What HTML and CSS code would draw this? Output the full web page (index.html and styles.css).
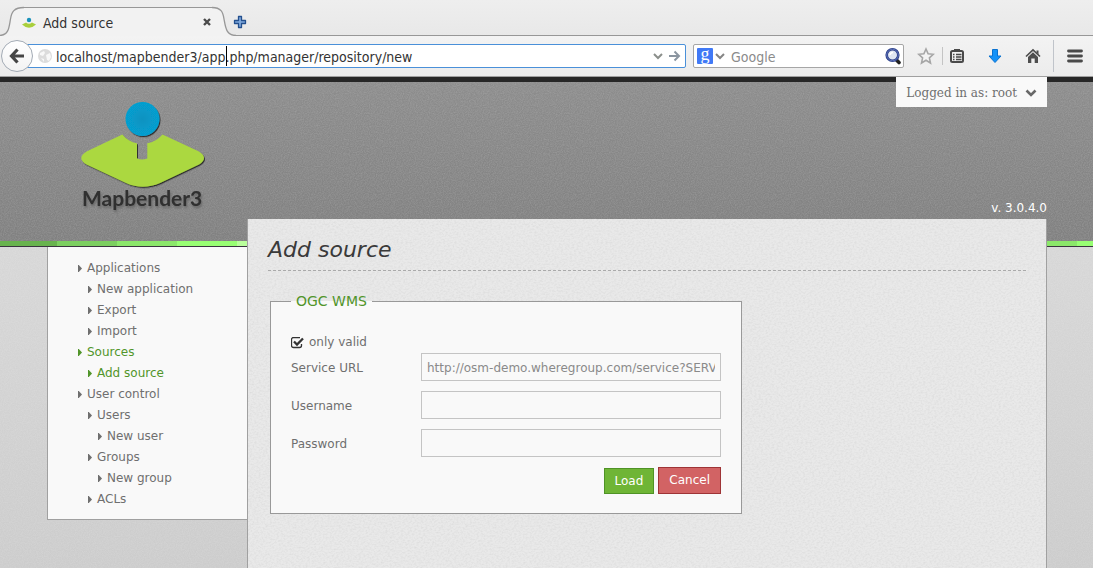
FILE: index.html
```html
<!DOCTYPE html>
<html lang="en">
<head>
<meta charset="utf-8">
<title>Add source</title>
<link rel="stylesheet" href="styles.css">
</head>
<body>
<div class="browser">
  <div class="tabstrip">
    <div class="tab">
      <svg class="tab-edge" width="24" height="36" viewBox="0 0 24 36" aria-hidden="true"><path class="edge-fill" d="M0 36V35.500C9 35 9 27 10.500 19 11.500 12 14 7.500 24 7.500V36z"/><path class="edge-line" d="M0 35.500C9 35 9 27 10.500 19 11.500 12 14 7.500 24 7.500"/></svg>
      <div class="tab-body">
        <svg width="16" height="16" viewBox="0 0 16 16" aria-hidden="true"><path d="M1 9.500 5 7.500Q8 10 11 7.500L15 9.500Q8 16 1 9.500z" fill="#a9cf3c"/><circle cx="8" cy="5" r="2.200" fill="#1b93bb"/></svg>
        <span class="tab-title">Add source</span>
        <button class="tab-close" aria-label="Close tab"><svg width="10" height="10" viewBox="0 0 10 10"><path d="M2 1l6 6M8 1l-6 6" stroke="#4a4a4a" stroke-width="2.400"/></svg></button>
      </div>
      <svg class="tab-edge" width="24" height="36" viewBox="0 0 24 36" aria-hidden="true"><path class="edge-fill" d="M0 7.500C9 7.500 11 12 12 19 13.500 27 14 35.500 24 35.500V36H0z"/><path class="edge-line" d="M0 7.500C9 7.500 11 12 12 19 13.500 27 14 35.500 24 35.500"/></svg>
    </div>
    <div class="strip-rest">
      <button aria-label="New tab"><svg width="14" height="14" viewBox="0 0 14 14"><path d="M5.500 1.500h3v4h4v3h-4v4h-3v-4h-4v-3h4z" fill="#7fa8dc" stroke="#24508f" stroke-width="1.300" stroke-linejoin="round"/></svg></button>
    </div>
  </div>
  <div class="toolbar">
    <button class="back" aria-label="Back"><svg width="16" height="16" viewBox="0 0 16 16"><path d="M8.500 1.500 2.500 8l6 6.500M3 8h12" fill="none" stroke="#454545" stroke-width="3.200"/></svg></button>
    <div class="urlbar">
      <svg width="14" height="14" viewBox="0 0 14 14" aria-hidden="true"><circle cx="7" cy="7" r="7" fill="#dcdcdc"/><path d="M2 4 6 2l1 2-2 3-3-1zM8 6l4-2 1 4-2 4-2-1zM3 9l3 1v3z" fill="#f8f8f8"/></svg>
      <div class="url-field">
        <input type="text" aria-label="Address" value="localhost/mapbender3/app.php/manager/repository/new">
        <span class="caret"></span>
      </div>
      <svg width="10" height="10" viewBox="0 0 10 10" aria-hidden="true"><path d="M1 3l4 4 4-4" fill="none" stroke="#8b8f8b" stroke-width="2"/></svg>
      <button aria-label="Go"><svg width="12" height="12" viewBox="0 0 12 12"><path d="M0 6h10M5.500 1.500 10 6l-4.500 4.500" fill="none" stroke="#8b95a0" stroke-width="2"/></svg></button>
    </div>
    <div class="search">
      <span class="engine">g</span>
      <svg width="10" height="10" viewBox="0 0 10 10" aria-hidden="true"><path d="M1 3l4 4 4-4" fill="none" stroke="#858585" stroke-width="2"/></svg>
      <input type="text" aria-label="Search" placeholder="Google">
      <button aria-label="Search"><svg width="18" height="18" viewBox="0 0 18 18"><path d="M12 12.500l3 3" stroke="#222" stroke-width="3.600" stroke-linecap="round"/><circle cx="8.500" cy="8" r="5.800" fill="#dfe6f2" stroke="#283c86" stroke-width="2.600"/><circle cx="8.500" cy="8" r="5.800" fill="none" stroke="#6f83c8" stroke-width=".8"/><path d="M6 8a3 3 0 0 1 3-2.500" fill="none" stroke="#fff" stroke-width="1.500"/></svg></button>
    </div>
    <div class="tools">
      <button aria-label="Bookmark"><svg width="18" height="18" viewBox="0 0 18 18"><path d="M9 2l2.100 4.800 5.200.5-3.900 3.500 1.100 5.200L9 13.300 4.500 16l1.100-5.200L1.700 7.300l5.200-.5z" fill="#f4f4f4" stroke="#a6a6a6" stroke-width="1.600"/></svg></button>
      <span class="divider"></span>
      <button aria-label="Bookmarks list"><svg width="16" height="16" viewBox="0 0 16 16"><rect x="2" y="3" width="12" height="11" rx="1.500" fill="none" stroke="#4a4a4a" stroke-width="2"/><path d="M5 3.500V1h6v2.500z" fill="#4a4a4a"/><path d="M4 6.500h1.500M4 9h1.500M4 11.500h1.500M7 6.500h5.500M7 9h5.500M7 11.500h5.500" stroke="#4a4a4a" stroke-width="1.300"/></svg></button>
      <button class="download" aria-label="Downloads"><svg width="16" height="16" viewBox="0 0 16 16"><path d="M5.500 1.500h5v6.500h3.500L8 14.500 2 8h3.500z" fill="#1492f8" stroke="#0a72d0"/></svg></button>
      <button class="home" aria-label="Home"><svg width="16" height="16" viewBox="0 0 16 16"><path d="M1 8.500 8 2l7 6.500" fill="none" stroke="#4e4e4e" stroke-width="1.700"/><path d="M11.500 2.500h2v4l-2-2zM3 9l5-4.700L13 9v6H9.700v-4.500H6.300V15H3z" fill="#4e4e4e"/></svg></button>
      <span class="divider tall"></span>
      <button aria-label="Menu"><svg width="16" height="16" viewBox="0 0 16 16"><path d="M1.500 3h13M1.500 8h13M1.500 13h13" stroke="#4a4a4a" stroke-width="2.800" stroke-linecap="round"/></svg></button>
    </div>
  </div>
</div>

<header class="header">
  <a class="logo" href="#" aria-label="Mapbender3">
    <svg width="132" height="122" viewBox="0 0 132 122">
      <defs>
        <radialGradient id="ball"><stop offset="0" stop-color="#0892c0"/><stop offset="1" stop-color="#069fd0"/></radialGradient>
        <filter id="drop" x="-10%" y="-10%" width="125%" height="125%"><feDropShadow dx="1" dy="1.200" stdDeviation=".5" flood-color="#222" flood-opacity=".85"/></filter>
      </defs>
      <path filter="url(#drop)" fill="#abd841" d="M45.300 37.500Q51.500 45 60 46.300V61.500Q65 63.500 70.300 61.500V46.300Q79 45 85.500 37.500L122 54.500Q132 61 122 67.500L83 86Q65.500 93.500 49 86L9.500 67.500Q-1 61 9.500 54.500z"/>
      <circle filter="url(#drop)" cx="65.500" cy="22" r="17" fill="url(#ball)"/>
      <text class="logo-text" x="5" y="109">Mapbender3</text>
    </svg>
  </a>
  <div class="header-side">
    <button class="account">Logged in as: root <svg width="12" height="8" viewBox="0 0 12 8" aria-hidden="true"><path d="M1.500 1.500 6 6l4.500-4.500" fill="none" stroke="#686868" stroke-width="2.600"/></svg></button>
    <span class="version">v. 3.0.4.0</span>
  </div>
</header>

<div class="layout">
  <nav class="sidebar">
    <ul class="menu">
      <li><a href="#">Applications</a>
        <ul>
          <li><a href="#">New application</a></li>
          <li><a href="#">Export</a></li>
          <li><a href="#">Import</a></li>
        </ul>
      </li>
      <li><a class="active" href="#">Sources</a>
        <ul>
          <li><a class="active" href="#">Add source</a></li>
        </ul>
      </li>
      <li><a href="#">User control</a>
        <ul>
          <li><a href="#">Users</a>
            <ul><li><a href="#">New user</a></li></ul>
          </li>
          <li><a href="#">Groups</a>
            <ul><li><a href="#">New group</a></li></ul>
          </li>
          <li><a href="#">ACLs</a></li>
        </ul>
      </li>
    </ul>
  </nav>
  <main class="content">
    <h1>Add source</h1>
    <form>
      <fieldset>
        <legend>OGC WMS</legend>
        <label class="check"><input type="checkbox" checked><svg width="14" height="12" viewBox="0 0 14 12" aria-hidden="true"><path d="M10.500 7V8.500a2 2 0 0 1-2 2H2.500a2 2 0 0 1-2-2V2.500a2 2 0 0 1 2-2H9" fill="none" stroke="#333" stroke-width="1.300"/><path d="M3 4.500l3 3 6-6" fill="none" stroke="#333" stroke-width="2.300"/></svg>only valid</label>
        <div class="row"><label for="url">Service URL</label><input id="url" type="text" placeholder="http://osm-demo.wheregroup.com/service?SERVICE=WMS"></div>
        <div class="row"><label for="user">Username</label><input id="user" type="text"></div>
        <div class="row"><label for="pass">Password</label><input id="pass" type="password"></div>
        <div class="actions"><button class="load" type="submit">Load</button><button class="cancel" type="button">Cancel</button></div>
      </fieldset>
    </form>
  </main>
</div>
</body>
</html>
```
FILE: styles.css
```css
* { box-sizing: border-box; }

:root {
  --grain: url("data:image/svg+xml,%3Csvg xmlns='http://www.w3.org/2000/svg' width='200' height='200'%3E%3Cfilter id='n'%3E%3CfeTurbulence type='fractalNoise' baseFrequency='.45 .6' numOctaves='2' stitchTiles='stitch'/%3E%3CfeColorMatrix values='0 0 0 0 .5 0 0 0 0 .5 0 0 0 0 .5 .5 0 0 0 -.19'/%3E%3C/filter%3E%3Crect width='200' height='200' filter='url(%23n)'/%3E%3C/svg%3E");
  --grain-light: url("data:image/svg+xml,%3Csvg xmlns='http://www.w3.org/2000/svg' width='200' height='200'%3E%3Cfilter id='n'%3E%3CfeTurbulence type='fractalNoise' baseFrequency='.85' numOctaves='2' stitchTiles='stitch'/%3E%3CfeColorMatrix values='0 0 0 0 1 0 0 0 0 1 0 0 0 0 1 .25 0 0 0 -.08'/%3E%3C/filter%3E%3Crect width='200' height='200' filter='url(%23n)'/%3E%3C/svg%3E");
}

body {
  margin: 0;
  min-height: 100vh;
  display: flex;
  flex-direction: column;
  font: 12px/21px "DejaVu Sans", sans-serif;
  color: #6f6f6f;
  background: #d4d4d4;
}

button {
  padding: 0;
  border: 0;
  background: none;
  font: inherit;
  color: inherit;
}
svg { display: block; flex: none; }
input { font: inherit; min-width: 0; }

/* Browser window */
.browser { font: 14px/20px "DejaVu Sans Condensed", "DejaVu Sans", sans-serif; color: #333; }
.tabstrip { display: flex; height: 36px; background: linear-gradient(#eee, #e8e8e8); }
.tab { display: flex; }
.edge-fill { fill: #f2f2f2; }
.edge-line { fill: none; stroke: #979797; stroke-width: 1.3; }
.tab-body {
  display: flex;
  align-items: center;
  width: 188px;
  margin-top: 7px;
  padding-top: 2px;
  border-top: 1px solid #979797;
  background: #f2f2f2;
}
.tab-body svg { margin-left: -3px; }
.tab-title { flex: 1; margin-left: 6px; }
.strip-rest { flex: 1; padding: 15px 0 0; border-bottom: 1px solid #979797; }
.strip-rest button { display: block; margin-left: -3px; }
.toolbar {
  display: flex;
  align-items: center;
  height: 41px;
  padding: 0 10px 0 1px;
  border-bottom: 1px solid #a0a0a0;
  background: linear-gradient(#f3f3f3, #ececec);
}
.back {
  position: relative;
  display: grid;
  place-items: center;
  flex: none;
  width: 32px;
  height: 32px;
  border: 1px solid #a3abb5;
  border-radius: 50%;
  background: linear-gradient(#fff, #f3f3f3);
}
.urlbar, .search {
  display: flex;
  align-items: center;
  height: 24px;
  border: 1px solid #a6a6a6;
  border-radius: 2px;
  background: #fff;
}
.urlbar { flex: 1; margin-left: -16px; padding: 0 4px 0 20px; gap: 6px; border-color: #4a90d9; }
.url-field { position: relative; flex: 1; display: flex; margin-left: -2px; }
.toolbar input { flex: 1; width: 100%; height: 20px; padding: 1px 0 0; border: 0; outline: 0; background: none; color: #333; }
.caret { position: absolute; top: 0; left: 170px; width: 1px; height: 20px; background: #000; }
.search { width: 211px; margin-left: 7px; padding: 0 1px 0 3px; }
.engine {
  width: 16px;
  height: 16px;
  margin-right: 2px;
  border-radius: 1px;
  background: #4079f6;
  color: #fff;
  font: 18px/12px "Liberation Serif", serif;
  text-align: center;
}
.search input { margin-left: 6px; }
.toolbar input::placeholder { color: #8b8b8b; opacity: 1; }
.tools { display: flex; align-items: center; margin-left: 13px; }
.divider { width: 1px; height: 18px; margin: 0 6px 0 7px; background: #c4c4c4; }
.divider.tall { height: 32px; margin: 0 13px 0 12px; background: #c0c4ca; }
.download, .home { margin-left: 22px; }

/* Application header */
.header {
  display: flex;
  justify-content: space-between;
  padding: 0 46px 27px 47px;
  border-bottom: 1px solid #3a3540;
  background:
    linear-gradient(#272727, #272727) top / 100% 5px no-repeat,
    repeating-linear-gradient(90deg, #68b34e 0 60px, #7ccf60 60px 120px, #8be76a 120px 180px, #98ff73 180px 240px, #baff9c 240px 300px) -3px 100% / calc(100% + 3px) 5px no-repeat,
    var(--grain-light),
    linear-gradient(#8d8d8d, #808080);
}
.logo { margin: 20px 0 0 30px; }
.logo-text { font: bold 21px Lato, sans-serif; fill: #303030; filter: drop-shadow(1px 2px 1px #666); }
.header-side { display: flex; flex-direction: column; justify-content: space-between; align-items: flex-end; }
.account {
  display: flex;
  align-items: center;
  gap: 8px;
  height: 30px;
  padding: 2px 10px 0;
  background: #f9f9f9;
  font-family: "DejaVu Serif", serif;
}
.version { color: #fff; }

/* Page body */
.layout {
  flex: 1;
  display: flex;
  align-items: flex-start;
  padding: 0 46px 0 47px;
  background: var(--grain-light), linear-gradient(#d7d7d7, #cccccc);
}
.sidebar {
  width: 200px;
  padding: 11px 10px 9px 30px;
  border: 1px solid #a0a0a0;
  border-width: 0 0 1px 1px;
  background: #f9f9f9;
}
.menu, .menu ul { margin: 0; padding: 0; list-style: none; }
.menu ul { padding-left: 10px; }
.menu a { display: flex; align-items: center; gap: 5px; color: #6f6f6f; text-decoration: none; }
.menu a::before {
  content: "";
  width: 4px;
  height: 7px;
  background: currentColor;
  clip-path: polygon(0 0, 20% 0, 100% 50%, 20% 100%, 0 100%);
}
.menu a.active { color: #51952a; }
.content {
  position: relative;
  align-self: stretch;
  flex: 1;
  margin-top: -28px;
  padding: 17px 20px 20px;
  border: 1px solid #a0a0a0;
  border-width: 0 1px;
  background: var(--grain), #e9e9e9;
}
h1 {
  margin: 0 0 20px;
  padding-bottom: 6px;
  border-bottom: 1px dashed #aaa;
  font: italic 22px/28px "DejaVu Sans", sans-serif;
  color: #3a3a3a;
}
fieldset {
  display: flex;
  flex-direction: column;
  gap: 10px;
  width: 472px;
  max-width: 100%;
  margin: 0 2px;
  padding: 21px 20px 19px;
  border: 1px solid #999;
  background: #f9f9f9;
}
legend { padding: 0 5px; font-size: 14px; line-height: 20px; color: #51952a; }
.check { display: flex; align-items: center; gap: 4px; margin-bottom: -10px; }
.check input { position: absolute; opacity: 0; margin: 0; }
.row { display: flex; align-items: center; }
.row label { width: 130px; padding-top: 2px; }
.row input {
  flex: 1;
  height: 28px;
  padding: 2px 5px 0;
  border: 1px solid #c4c4c4;
  background: #f9f9f9;
  color: #6f6f6f;
}
.row input::placeholder { color: #8a8a8a; opacity: 1; }
.actions { display: flex; justify-content: flex-end; align-items: flex-end; gap: 4px; }
.actions button { padding: 2px 10px; border: 1px solid; color: #fff; }
.actions .load { height: 26px; border-color: #4f9326; background: #6fb536; }
.actions .cancel { height: 27px; border-color: #9e3436; background: #d26364; }
```
